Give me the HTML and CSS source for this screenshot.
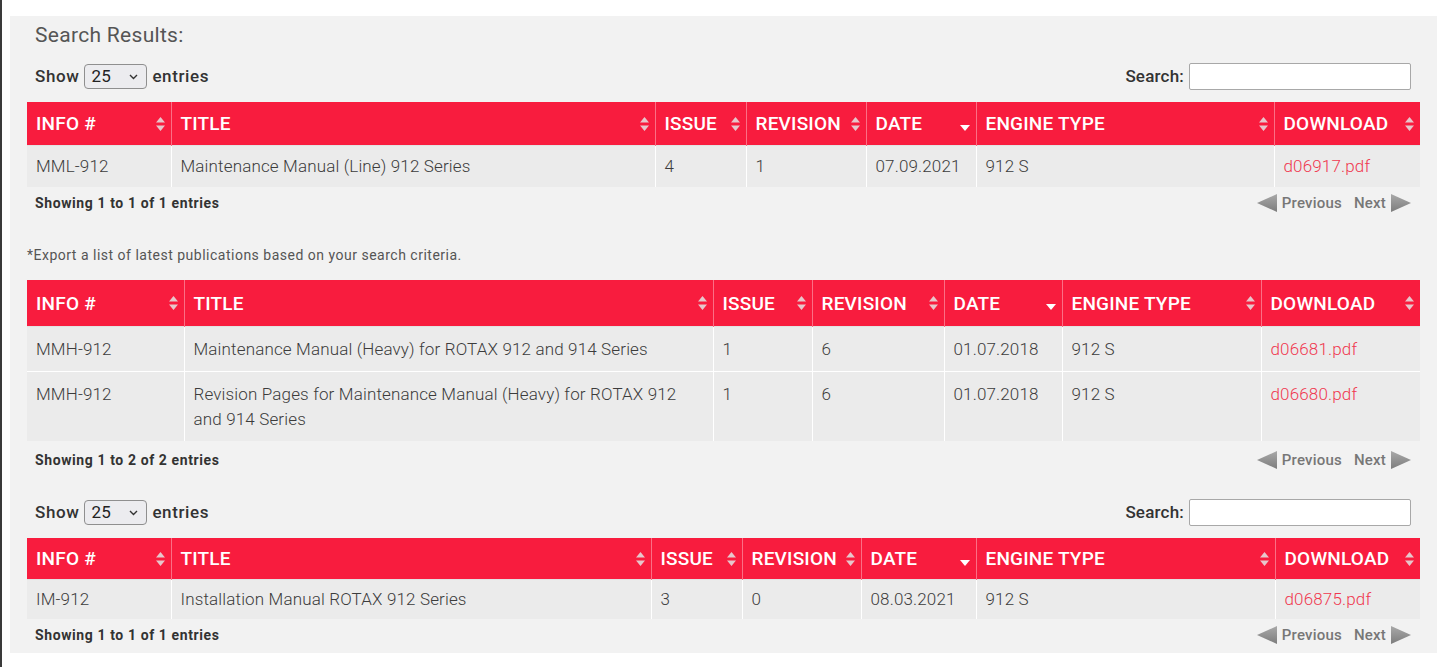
FILE: index.html
```html
<!DOCTYPE html>
<html>
<head>
<meta charset="utf-8">
<link rel="stylesheet" href="styles.css">
</head>
<body>
<div class="frame">
  <div class="panel">
    <h2 class="title">Search Results:</h2>

    <div class="block">
      <div class="controls">
        <label class="length">Show
          <span class="select-wrap">
            <select class="select"><option>25</option><option>50</option><option>100</option></select>
            <svg class="chev" width="9" height="6" viewBox="0 0 9 6"><path d="M1 1 L4.5 4.5 L8 1" fill="none" stroke="#333" stroke-width="1.4"/></svg>
          </span>
          entries</label>
        <label class="search">Search: <input class="search-input" type="text"></label>
      </div>
      <table class="grid t1">
        <colgroup><col class="c1"><col class="c2"><col class="c3"><col class="c4"><col class="c5"><col class="c6"><col class="c7"></colgroup>
        <thead>
          <tr>
            <th><div class="th">INFO #<svg class="sort" width="9" height="14" viewBox="0 0 9 14"><path d="M4.5 0 L9 5.5 H0Z M4.5 14 L9 8.5 H0Z"/></svg></div></th>
            <th><div class="th">TITLE<svg class="sort" width="9" height="14" viewBox="0 0 9 14"><path d="M4.5 0 L9 5.5 H0Z M4.5 14 L9 8.5 H0Z"/></svg></div></th>
            <th><div class="th">ISSUE<svg class="sort" width="9" height="14" viewBox="0 0 9 14"><path d="M4.5 0 L9 5.5 H0Z M4.5 14 L9 8.5 H0Z"/></svg></div></th>
            <th><div class="th">REVISION<svg class="sort" width="9" height="14" viewBox="0 0 9 14"><path d="M4.5 0 L9 5.5 H0Z M4.5 14 L9 8.5 H0Z"/></svg></div></th>
            <th><div class="th">DATE<svg class="desc" width="10" height="14" viewBox="0 0 10 14"><path d="M0 8 H10 L5 14Z"/></svg></div></th>
            <th><div class="th">ENGINE TYPE<svg class="sort" width="9" height="14" viewBox="0 0 9 14"><path d="M4.5 0 L9 5.5 H0Z M4.5 14 L9 8.5 H0Z"/></svg></div></th>
            <th><div class="th">DOWNLOAD<svg class="sort" width="9" height="14" viewBox="0 0 9 14"><path d="M4.5 0 L9 5.5 H0Z M4.5 14 L9 8.5 H0Z"/></svg></div></th>
          </tr>
        </thead>
        <tbody>
          <tr>
            <td>MML-912</td>
            <td>Maintenance Manual (Line) 912 Series</td>
            <td>4</td>
            <td>1</td>
            <td>07.09.2021</td>
            <td>912 S</td>
            <td><a class="dl" href="#">d06917.pdf</a></td>
          </tr>
        </tbody>
      </table>
      <div class="info">
        <span class="count">Showing 1 to 1 of 1 entries</span>
        <span class="pager">
          <svg class="arrow" width="20" height="18" viewBox="0 0 20 18"><defs><linearGradient id="ga" x1="0" y1="0" x2="0" y2="1"><stop offset="0" stop-color="#a9a9a9"/><stop offset="1" stop-color="#7d7d7d"/></linearGradient></defs><path d="M0 9 L20 0 V18Z" fill="url(#ga)"/></svg>
          <a class="pg" href="#">Previous</a>
          <a class="pg next" href="#">Next</a>
          <svg class="arrow" width="20" height="18" viewBox="0 0 20 18"><path d="M20 9 L0 0 V18Z" fill="url(#ga)"/></svg>
        </span>
      </div>
    </div>

    <p class="export">*Export a list of latest publications based on your search criteria.</p>

    <div class="block">
      <table class="grid t2">
        <colgroup><col class="c1"><col class="c2"><col class="c3"><col class="c4"><col class="c5"><col class="c6"><col class="c7"></colgroup>
        <thead>
          <tr>
            <th><div class="th">INFO #<svg class="sort" width="9" height="14" viewBox="0 0 9 14"><path d="M4.5 0 L9 5.5 H0Z M4.5 14 L9 8.5 H0Z"/></svg></div></th>
            <th><div class="th">TITLE<svg class="sort" width="9" height="14" viewBox="0 0 9 14"><path d="M4.5 0 L9 5.5 H0Z M4.5 14 L9 8.5 H0Z"/></svg></div></th>
            <th><div class="th">ISSUE<svg class="sort" width="9" height="14" viewBox="0 0 9 14"><path d="M4.5 0 L9 5.5 H0Z M4.5 14 L9 8.5 H0Z"/></svg></div></th>
            <th><div class="th">REVISION<svg class="sort" width="9" height="14" viewBox="0 0 9 14"><path d="M4.5 0 L9 5.5 H0Z M4.5 14 L9 8.5 H0Z"/></svg></div></th>
            <th><div class="th">DATE<svg class="desc" width="10" height="14" viewBox="0 0 10 14"><path d="M0 8 H10 L5 14Z"/></svg></div></th>
            <th><div class="th">ENGINE TYPE<svg class="sort" width="9" height="14" viewBox="0 0 9 14"><path d="M4.5 0 L9 5.5 H0Z M4.5 14 L9 8.5 H0Z"/></svg></div></th>
            <th><div class="th">DOWNLOAD<svg class="sort" width="9" height="14" viewBox="0 0 9 14"><path d="M4.5 0 L9 5.5 H0Z M4.5 14 L9 8.5 H0Z"/></svg></div></th>
          </tr>
        </thead>
        <tbody>
          <tr>
            <td>MMH-912</td>
            <td>Maintenance Manual (Heavy) for ROTAX 912 and 914 Series</td>
            <td>1</td>
            <td>6</td>
            <td>01.07.2018</td>
            <td>912 S</td>
            <td><a class="dl" href="#">d06681.pdf</a></td>
          </tr>
          <tr>
            <td>MMH-912</td>
            <td>Revision Pages for Maintenance Manual (Heavy) for ROTAX 912 and 914 Series</td>
            <td>1</td>
            <td>6</td>
            <td>01.07.2018</td>
            <td>912 S</td>
            <td><a class="dl" href="#">d06680.pdf</a></td>
          </tr>
        </tbody>
      </table>
      <div class="info info2">
        <span class="count">Showing 1 to 2 of 2 entries</span>
        <span class="pager">
          <svg class="arrow" width="20" height="18" viewBox="0 0 20 18"><path d="M0 9 L20 0 V18Z" fill="url(#ga)"/></svg>
          <a class="pg" href="#">Previous</a>
          <a class="pg next" href="#">Next</a>
          <svg class="arrow" width="20" height="18" viewBox="0 0 20 18"><path d="M20 9 L0 0 V18Z" fill="url(#ga)"/></svg>
        </span>
      </div>
    </div>

    <div class="block">
      <div class="controls controls3">
        <label class="length">Show
          <span class="select-wrap">
            <select class="select"><option>25</option><option>50</option><option>100</option></select>
            <svg class="chev" width="9" height="6" viewBox="0 0 9 6"><path d="M1 1 L4.5 4.5 L8 1" fill="none" stroke="#333" stroke-width="1.4"/></svg>
          </span>
          entries</label>
        <label class="search">Search: <input class="search-input" type="text"></label>
      </div>
      <table class="grid t3">
        <colgroup><col class="c1"><col class="c2"><col class="c3"><col class="c4"><col class="c5"><col class="c6"><col class="c7"></colgroup>
        <thead>
          <tr>
            <th><div class="th">INFO #<svg class="sort" width="9" height="14" viewBox="0 0 9 14"><path d="M4.5 0 L9 5.5 H0Z M4.5 14 L9 8.5 H0Z"/></svg></div></th>
            <th><div class="th">TITLE<svg class="sort" width="9" height="14" viewBox="0 0 9 14"><path d="M4.5 0 L9 5.5 H0Z M4.5 14 L9 8.5 H0Z"/></svg></div></th>
            <th><div class="th">ISSUE<svg class="sort" width="9" height="14" viewBox="0 0 9 14"><path d="M4.5 0 L9 5.5 H0Z M4.5 14 L9 8.5 H0Z"/></svg></div></th>
            <th><div class="th">REVISION<svg class="sort" width="9" height="14" viewBox="0 0 9 14"><path d="M4.5 0 L9 5.5 H0Z M4.5 14 L9 8.5 H0Z"/></svg></div></th>
            <th><div class="th">DATE<svg class="desc" width="10" height="14" viewBox="0 0 10 14"><path d="M0 8 H10 L5 14Z"/></svg></div></th>
            <th><div class="th">ENGINE TYPE<svg class="sort" width="9" height="14" viewBox="0 0 9 14"><path d="M4.5 0 L9 5.5 H0Z M4.5 14 L9 8.5 H0Z"/></svg></div></th>
            <th><div class="th">DOWNLOAD<svg class="sort" width="9" height="14" viewBox="0 0 9 14"><path d="M4.5 0 L9 5.5 H0Z M4.5 14 L9 8.5 H0Z"/></svg></div></th>
          </tr>
        </thead>
        <tbody>
          <tr>
            <td>IM-912</td>
            <td>Installation Manual ROTAX 912 Series</td>
            <td>3</td>
            <td>0</td>
            <td>08.03.2021</td>
            <td>912 S</td>
            <td><a class="dl" href="#">d06875.pdf</a></td>
          </tr>
        </tbody>
      </table>
      <div class="info info3">
        <span class="count">Showing 1 to 1 of 1 entries</span>
        <span class="pager">
          <svg class="arrow" width="20" height="18" viewBox="0 0 20 18"><path d="M0 9 L20 0 V18Z" fill="url(#ga)"/></svg>
          <a class="pg" href="#">Previous</a>
          <a class="pg next" href="#">Next</a>
          <svg class="arrow" width="20" height="18" viewBox="0 0 20 18"><path d="M20 9 L0 0 V18Z" fill="url(#ga)"/></svg>
        </span>
      </div>
    </div>
  </div>
</div>
</body>
</html>
```

FILE: styles.css
```css
html, body {
  margin: 0;
  padding: 0;
  background: #fff;
}
body {
  font-family: Roboto, "Liberation Sans", Arial, sans-serif;
  color: #474747;
}
.frame {
  border-left: 2px solid #3a3a3a;
  min-height: 667px;
  box-sizing: border-box;
  padding: 16px 13px 0 8px;
}
.panel {
  background: #f2f2f2;
  padding: 6px 17px 9px 17px;
  width: 1393px;
}
.title {
  margin: 0 0 0 8px;
  font-size: 21px;
  line-height: 26px;
  font-weight: 400;
  color: #555;
  letter-spacing: 0.3px;
}
.controls {
  display: flex;
  justify-content: space-between;
  align-items: center;
  height: 28px;
  margin: 14px 9px 12px 8px;
}
.controls3 {
  margin-top: 29px;
}
.length, .search {
  font-size: 17px;
  font-weight: 500;
  color: #333;
  display: flex;
  align-items: center;
  gap: 5px;
  letter-spacing: 0.2px;
}
.length {
  letter-spacing: 0.6px;
}
.select-wrap {
  position: relative;
  display: inline-block;
  width: 63px;
  height: 25px;
}
.select {
  -webkit-appearance: none;
  appearance: none;
  width: 63px;
  height: 25px;
  border: 1px solid #8f8f8f;
  border-radius: 4px;
  background: #ececef;
  font-family: Roboto, "Liberation Sans", Arial, sans-serif;
  font-size: 17px;
  color: #222;
  padding: 0 0 0 6px;
  box-sizing: border-box;
  letter-spacing: 0.2px;
}
.chev {
  position: absolute;
  right: 9px;
  top: 10px;
  pointer-events: none;
}
.search-input {
  width: 222px;
  height: 27px;
  box-sizing: border-box;
  border: 1px solid #a8a8a8;
  border-radius: 2px;
  background: #fff;
  margin: 0;
}
.grid {
  width: 1393px;
  table-layout: fixed;
  border-collapse: collapse;
  border-spacing: 0;
}
.grid th {
  background: #f81c3e;
  color: #fff;
  font-size: 19px;
  font-weight: 500;
  text-align: left;
  padding: 0 6px 0 9px;
  height: 43px;
  border-left: 1px solid #fb6f85;
  vertical-align: middle;
  letter-spacing: 0.2px;
}
.grid th:first-child, .grid td:first-child {
  border-left: none;
}
.th {
  display: flex;
  justify-content: space-between;
  align-items: center;
}
.sort path {
  fill: #e4e4e4;
  opacity: 0.85;
}
.desc path {
  fill: #fff;
}
.grid td {
  background: #ebebeb;
  font-size: 17px;
  font-weight: 300;
  line-height: 25px;
  padding: 8px 9px 8px 9px;
  border-left: 1px solid #fff;
  border-top: 1px solid #fff;
  vertical-align: top;
  color: #3c3c3c;
  letter-spacing: 0.15px;
}
.grid tbody tr:first-child td {
  border-top: 1px solid #e2e2e2;
}
.dl {
  color: #f0384f;
  text-decoration: none;
}
.t1 .c1 { width: 144px; }
.t1 .c2 { width: 484px; }
.t1 .c3 { width: 91px; }
.t1 .c4 { width: 120px; }
.t1 .c5 { width: 110px; }
.t1 .c6 { width: 298px; }
.t1 .c7 { width: 146px; }

.t2 .c1 { width: 157px; }
.t2 .c2 { width: 529px; }
.t2 .c3 { width: 99px; }
.t2 .c4 { width: 132px; }
.t2 .c5 { width: 118px; }
.t2 .c6 { width: 199px; }
.t2 .c7 { width: 159px; }
.t2 th { height: 46px; }
.t2 td { padding: 10px 9px 9px 9px; }

.t3 .c1 { width: 144px; }
.t3 .c2 { width: 480px; }
.t3 .c3 { width: 91px; }
.t3 .c4 { width: 119px; }
.t3 .c5 { width: 115px; }
.t3 .c6 { width: 299px; }
.t3 .c7 { width: 145px; }
.t3 th { height: 41px; }
.t3 td { padding: 7px 9px 7px 9px; }

.info {
  display: flex;
  justify-content: space-between;
  align-items: center;
  height: 18px;
  margin: 7px 9px 0 8px;
}
.info2 { margin-top: 10px; }
.info3 { margin-top: 7px; }
.count {
  font-size: 14px;
  font-weight: 700;
  color: #333;
  letter-spacing: 0.6px;
}
.pager {
  display: flex;
  align-items: center;
}
.pg {
  font-size: 15px;
  font-weight: 500;
  color: #777;
  text-decoration: none;
  margin-left: 5px;
  letter-spacing: 0.2px;
}
.pg.next {
  margin-left: 12px;
  margin-right: 5px;
}
.export {
  margin: 35px 0 17px 0;
  font-size: 14px;
  line-height: 16px;
  color: #555;
  letter-spacing: 0.5px;
}
```
